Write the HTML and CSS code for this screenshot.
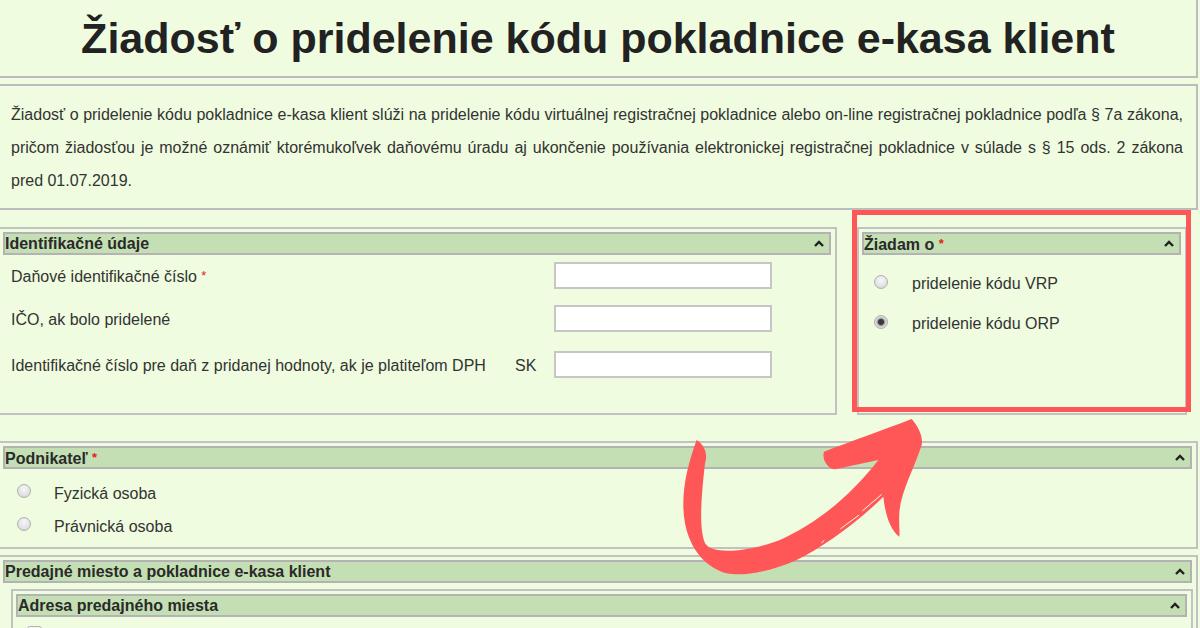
FILE: index.html
```html
<!DOCTYPE html>
<html lang="sk">
<head>
  <meta charset="UTF-8" />
  <meta name="viewport" content="width=device-width,initial-scale=1.0" />
  <title>Žiadosť o pridelenie kódu pokladnice e-kasa klient</title>
  <link rel="stylesheet" href="styles.css">
</head>
<body>
  <div class="page">
    <header class="title-box">
      <h1>Žiadosť o pridelenie kódu pokladnice e-kasa klient</h1>
    </header>

    <div class="intro">
      <p>Žiadosť o pridelenie kódu pokladnice e-kasa klient slúži na pridelenie kódu virtuálnej registračnej pokladnice alebo on-line registračnej pokladnice podľa § 7a zákona, pričom žiadosťou je možné oznámiť ktorémukoľvek daňovému úradu aj ukončenie používania elektronickej registračnej pokladnice v súlade s § 15 ods. 2 zákona pred 01.07.2019.</p>
    </div>

    <div class="row-2">
      <section class="panel panel-id">
        <div class="panel-head">
          <span>Identifikačné údaje</span>
          <svg class="caret" viewBox="0 0 10 7"><polyline points="1,6 5,2 9,6" /></svg>
        </div>
        <div class="field field-first">
          <label>Daňové identifikačné číslo <span class="req">*</span></label>
          <span class="prefix"></span>
          <input type="text" class="text-input">
        </div>
        <div class="field">
          <label>IČO, ak bolo pridelené</label>
          <span class="prefix"></span>
          <input type="text" class="text-input">
        </div>
        <div class="field">
          <label>Identifikačné číslo pre daň z pridanej hodnoty, ak je platiteľom DPH</label>
          <span class="prefix">SK</span>
          <input type="text" class="text-input">
        </div>
      </section>

      <section class="panel panel-request">
        <div class="panel-head">
          <span>Žiadam o <span class="req">*</span></span>
          <svg class="caret" viewBox="0 0 10 7"><polyline points="1,6 5,2 9,6" /></svg>
        </div>
        <div class="options options-request">
          <label class="option"><input type="radio" name="ziadam" class="radio">pridelenie kódu VRP</label>
          <label class="option"><input type="radio" name="ziadam" class="radio" checked>pridelenie kódu ORP</label>
        </div>
      </section>
    </div>

    <section class="panel panel-entrepreneur">
      <div class="panel-head">
        <span>Podnikateľ <span class="req">*</span></span>
        <svg class="caret" viewBox="0 0 10 7"><polyline points="1,6 5,2 9,6" /></svg>
      </div>
      <div class="options options-entrepreneur">
        <label class="option"><input type="radio" name="podnikatel" class="radio">Fyzická osoba</label>
        <label class="option"><input type="radio" name="podnikatel" class="radio">Právnická osoba</label>
      </div>
    </section>

    <section class="panel panel-shop">
      <div class="panel-head">
        <span>Predajné miesto a pokladnice e-kasa klient</span>
        <svg class="caret" viewBox="0 0 10 7"><polyline points="1,6 5,2 9,6" /></svg>
      </div>
      <section class="panel panel-inner">
        <div class="panel-head">
          <span>Adresa predajného miesta</span>
          <svg class="caret" viewBox="0 0 10 7"><polyline points="1,6 5,2 9,6" /></svg>
        </div>
        <div class="check-row"><input type="checkbox" class="checkbox" aria-label="Adresa predajného miesta"></div>
      </section>
    </section>
  </div>

  <div class="highlight"></div>

  <svg class="arrow" viewBox="0 0 810 600">
    <path d="M 80 120
             C 110 140, 112 170, 105 190
             C 95 280, 85 380, 105 430
             C 130 470, 250 450, 330 420
             C 440 370, 540 290, 625 180
             L 495 208
             C 470 205, 455 175, 462 155
             C 540 125, 640 90, 725 57
             C 745 80, 760 110, 755 135
             C 735 200, 690 280, 688 340
             C 686 370, 690 395, 688 410
             C 660 390, 645 340, 640 290
             C 560 370, 460 440, 380 480
             C 300 515, 220 530, 170 520
             C 110 505, 60 450, 45 370
             C 30 290, 50 200, 80 120 Z" />
    <line class="streak" x1="634" y1="284" x2="578" y2="332" />
    <line class="streak" x1="566" y1="346" x2="512" y2="386" />
    <line class="streak" x1="462" y1="422" x2="455" y2="428" />
  </svg>
</body>
</html>
```

FILE: styles.css
```css
* { margin: 0; padding: 0; box-sizing: border-box; }

body {
  position: relative;
  height: 628px;
  overflow: hidden;
  background: #effcdf;
  font-family: "Liberation Sans", Arial, sans-serif;
  font-size: 16px;
  color: #333;
}

.page {
  margin-left: -2px;
  width: 1200px;
}

.title-box {
  margin-top: -2px;
  height: 80px;
  border: 2px solid #bcbcbc;
  text-align: center;
}
.title-box h1 {
  font-size: 43px;
  line-height: 76px;
  color: #222;
}

.intro {
  margin-top: 6px;
  border: 2px solid #bcbcbc;
  padding: 12px 13px 11px 11px;
}
.intro p {
  line-height: 33px;
  text-align: justify;
}

.row-2 {
  display: flex;
  gap: 20px;
  margin-top: 17px;
  align-items: flex-start;
}

.panel { border: 2px solid #c2c2c2; }

.panel-head {
  display: flex;
  justify-content: space-between;
  align-items: center;
  height: 23px;
  margin: 3px 4px 0 3px;
  padding: 0 5px 0 0;
  background: #c4dfb3;
  border: 2px solid #b3b3b3;
  font-weight: bold;
  line-height: 19px;
  color: #2a2a2a;
}

.caret {
  width: 10px;
  height: 7px;
}
.caret polyline {
  fill: none;
  stroke: #222;
  stroke-width: 2.4;
}

.req { color: #e52020; font-size: 13px; vertical-align: 2px; }

.panel-id { width: 839px; height: 188px; }

.field {
  display: flex;
  align-items: center;
  height: 46px;
  padding-left: 11px;
}
.field-first { height: 40px; }
.field label { width: 504px; padding-top: 4px; }
.prefix { width: 39px; padding-top: 4px; }

.text-input {
  width: 218px;
  height: 27px;
  border: 2px solid #c6c6c6;
  background: #fff;
}

.panel-request { width: 330px; height: 188px; }

.options { display: flex; flex-direction: column; }
.option { display: flex; align-items: center; }
.option .radio { flex: 0 0 auto; }

.options-request { padding: 7px 0 0 15px; }
.options-request .option { height: 40px; padding-top: 4px; }
.options-request .radio { margin-right: 24px; margin-top: -5px; }

.radio {
  appearance: none;
  width: 14px;
  height: 14px;
  border-radius: 50%;
  border: 1px solid #b0b0b0;
  background: radial-gradient(circle at 50% 35%, #f7f7f7 0, #e2e2e2 60%, #cfcfcf 100%);
}
.radio:checked {
  background: radial-gradient(circle, #3a3a3a 0 2.5px, #9a9a9a 3.5px, #dcdcdc 5px, #cdcdcd 100%);
}

.panel-entrepreneur { margin-top: 26px; height: 108px; }
.options-entrepreneur { padding: 6px 0 0 17px; }
.options-entrepreneur .option { height: 33px; padding-top: 4px; }
.options-entrepreneur .radio { margin-right: 23px; margin-top: -6px; }

.panel-shop { margin-top: 6px; height: 120px; }
.panel-inner { margin: 6px 3px 0 11px; height: 80px; }

.check-row {
  display: flex;
  align-items: center;
  margin: 9px 0 0 14px;
}
.checkbox {
  appearance: none;
  width: 15px;
  height: 15px;
  border: 1px solid #b0b0b0;
  border-radius: 3px;
  background: linear-gradient(#f7f7f7, #d8d8d8);
}

.highlight {
  position: absolute;
  left: 852px;
  top: 210px;
  width: 339px;
  height: 202px;
  border: 5px solid #ff5757;
}

.arrow {
  position: absolute;
  left: 670px;
  top: 400px;
  width: 270px;
  height: 200px;
}
.arrow path { fill: #ff5757; }
.arrow .streak { stroke: #effcdf; stroke-width: 3; stroke-linecap: round; }
```
